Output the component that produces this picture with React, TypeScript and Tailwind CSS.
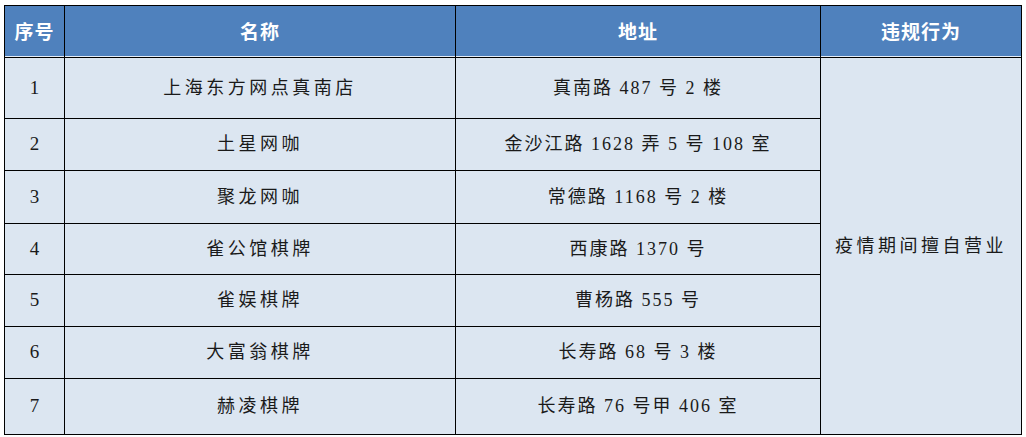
import React from "react";

const rows = [
  { id: "1", name: "上海东方网点真南店", addr: "真南路 487 号 2 楼", h: "h-[61px]" },
  { id: "2", name: "土星网咖", addr: "金沙江路 1628 弄 5 号 108 室", h: "h-[52px]" },
  { id: "3", name: "聚龙网咖", addr: "常德路 1168 号 2 楼", h: "h-[53px]" },
  { id: "4", name: "雀公馆棋牌", addr: "西康路 1370 号", h: "h-[51px]" },
  { id: "5", name: "雀娱棋牌", addr: "曹杨路 555 号", h: "h-[52px]" },
  { id: "6", name: "大富翁棋牌", addr: "长寿路 68 号 3 楼", h: "h-[52px]" },
  { id: "7", name: "赫凌棋牌", addr: "长寿路 76 号甲 406 室", h: "h-[56px]" },
];

export default function App() {
  return (
    <div className="w-[1026px] h-[437px] bg-white pl-[4px] pt-[5px]">
      <table className="w-[1017px] border-collapse table-fixed">
        <colgroup>
          <col className="w-[60px]" />
          <col className="w-[391px]" />
          <col className="w-[365px]" />
          <col className="w-[201px]" />
        </colgroup>
        <thead>
          <tr className="h-[52px] bg-[#4f81bd] text-white font-['Noto_Sans_CJK_SC',sans-serif] font-bold text-[19px]">
            {["序号", "名称", "地址", "违规行为"].map((t) => (
              <th
                key={t}
                className="border border-black border-b-0 shadow-[inset_0_-1px_0_#e6eef8] tracking-[1px] font-bold"
              >
                {t}
              </th>
            ))}
          </tr>
        </thead>
        <tbody className="bg-[#dce6f1] text-[#1a1a1a] text-[18px]">
          {rows.map((r, i) => (
            <tr key={r.id} className={r.h}>
              <td className="border border-black text-center text-[19px] font-['Liberation_Serif',serif]">
                {r.id}
              </td>
              <td className="border border-black text-center tracking-[3.5px] font-['Liberation_Serif','Noto_Sans_CJK_SC',serif]">
                {r.name}
              </td>
              <td className="border border-black text-center tracking-[2px] font-['Liberation_Serif','Noto_Sans_CJK_SC',serif]">
                {r.addr}
              </td>
              {i === 0 && (
                <td
                  rowSpan={rows.length}
                  className="border border-black text-center tracking-[3.5px] font-['Liberation_Serif','Noto_Sans_CJK_SC',serif]"
                >
                  疫情期间擅自营业
                </td>
              )}
            </tr>
          ))}
        </tbody>
      </table>
    </div>
  );
}
